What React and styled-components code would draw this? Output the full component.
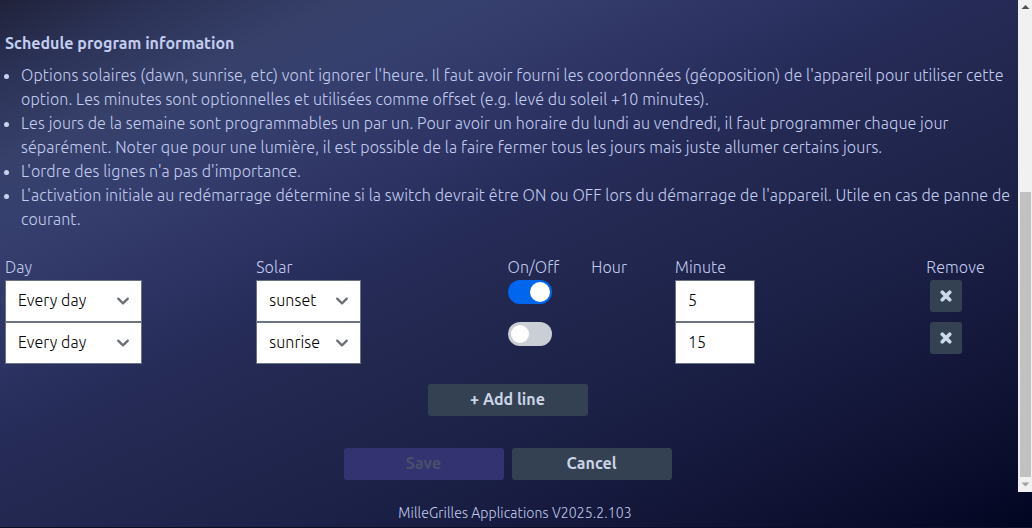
import React from "react";
import styled, { createGlobalStyle } from "styled-components";

const Global = createGlobalStyle`
  *, *::before, *::after { box-sizing: border-box; }
  body {
    margin: 0;
    overflow: hidden;
    font-family: Ubuntu, "Open Sans", "Noto Sans", sans-serif;
    font-size: 16px;
    font-weight: 300;
    line-height: 24px;
    letter-spacing: 0.1px;
    color: #c3cdf0;
    background: #02041f;
  }
`;

const Page = styled.div`
  display: flex;
  flex-direction: column;
  height: 528px;
  border-bottom: 1px solid #0b0d2b;
  background: linear-gradient(155deg,
    #20223a 0%, #2c3358 8%, #364069 16%, #36406e 22%, #323a69 29%, #2c3261 37%,
    #262c58 44%, #222850 52%, #1c2147 66%, #161a3e 76%, #111435 84%, #0a0d2b 92%, #020522 100%);
`;

const Viewport = styled.div`
  display: flex;
  height: 492px;
`;

const Content = styled.main`
  flex: 1;
  padding: 31px 8px 0 5px;
`;

const Title = styled.h2`
  margin: 0 0 8px;
  font-size: 16px;
  line-height: 24px;
  font-weight: 600;
  letter-spacing: 0;
`;

const Text = styled.span`
  display: inline-block;
  white-space: nowrap;
`;

const Notes = styled.ul`
  margin: 0 -3px 24px 0;
  padding: 0 0 0 16px;
  list-style: none;
`;

const Note = styled.li`
  position: relative;
  &::before {
    content: "";
    position: absolute;
    left: -17px;
    top: 11px;
    width: 5px;
    height: 5px;
    border-radius: 50%;
    background: #c9d3f0;
  }
`;

const Row = styled.div`
  display: grid;
  grid-template-columns: 3fr 3fr 1fr 1fr 3fr 1fr;
  height: ${(p) => (p.$head ? 25 : 42)}px;
  align-items: start;
`;

const Field = styled.div`
  display: flex;
  align-items: center;
  justify-content: space-between;
  width: ${(p) => p.$width}px;
  height: 42px;
  padding: 0 6px 0 12px;
  border: 1px solid #6b7280;
  background: #fff;
  color: #000;
  ${Text} { padding-bottom: 2px; }
`;

const Toggle = styled.div`
  display: flex;
  align-items: center;
  justify-content: ${(p) => (p.$on ? "flex-end" : "flex-start")};
  width: 44px;
  height: 24px;
  padding: 0 ${(p) => (p.$on ? 2 : 3)}px;
  border-radius: 12px;
  background: ${(p) => (p.$on ? "#0066ee" : "#cacfd6")};
  &::before {
    content: "";
    width: ${(p) => (p.$on ? 20 : 18)}px;
    height: ${(p) => (p.$on ? 20 : 18)}px;
    border-radius: 50%;
    background: #fff;
  }
`;

const Button = styled.button`
  width: 160px;
  height: 32px;
  padding: 0 0 2px;
  border: 0;
  border-radius: 3px;
  font: 600 16px/24px Ubuntu, "Open Sans", "Noto Sans", sans-serif;
  color: ${(p) => (p.$primary ? "#46506b" : "#cbd5e6")};
  background: ${(p) => (p.$primary ? "#343371" : "#344153")};
`;

const RemoveButton = styled.button`
  display: flex;
  align-items: center;
  justify-content: center;
  width: 32px;
  height: 32px;
  margin-left: 4px;
  padding: 0;
  border: 0;
  border-radius: 3px;
  color: #cbd9ec;
  background: #344153;
`;

const Actions = styled.div`
  display: flex;
  justify-content: center;
  gap: 8px;
  padding-top: ${(p) => p.$top}px;
`;

const Scrollbar = styled.div`
  display: flex;
  flex-direction: column;
  align-items: center;
  width: 14px;
  background: #f1f1f1;
`;

const Thumb = styled.div`
  width: 11px;
  height: 285px;
  margin-top: 178px;
  background: #c1c1c1;
`;

const Arrow = styled.svg`
  display: block;
  width: 14px;
  height: 14px;
`;

const Footer = styled.footer`
  display: flex;
  justify-content: center;
  padding: 9px 2px 0 0;
  font-size: 14px;
`;

const Chevron = () => (
  <svg width="24" height="24" viewBox="0 0 20 20" fill="none">
    <path d="M6 8l4 4 4-4" stroke="#6b7075" strokeWidth="1.9" strokeLinecap="round" strokeLinejoin="round" />
  </svg>
);

const Cross = () => (
  <svg width="12" height="12" viewBox="0 0 12 12" fill="none">
    <path d="M2.3 2.3L9.7 9.7M9.7 2.3L2.3 9.7" stroke="currentColor" strokeWidth="3.7" strokeLinecap="round" />
  </svg>
);

const notes = [
  "Options solaires (dawn, sunrise, etc) vont ignorer l'heure. Il faut avoir fourni les coordonnées (géoposition) de l'appareil pour utiliser cette option. Les minutes sont optionnelles et utilisées comme offset (e.g. levé du soleil +10 minutes).",
  "Les jours de la semaine sont programmables un par un. Pour avoir un horaire du lundi au vendredi, il faut programmer chaque jour séparément. Noter que pour une lumière, il est possible de la faire fermer tous les jours mais juste allumer certains jours.",
  "L'ordre des lignes n'a pas d'importance.",
  "L'activation initiale au redémarrage détermine si la switch devrait être ON ou OFF lors du démarrage de l'appareil. Utile en cas de panne de courant.",
];

const lines = [
  { day: "Every day", solar: "sunset", on: true, minute: "5" },
  { day: "Every day", solar: "sunrise", on: false, minute: "15" },
];

export default function App() {
  return (
    <>
      <Global />
      <Page>
        <Viewport>
          <Content>
            <Title>Schedule program information</Title>
            <Notes>
              {notes.map((note) => (
                <Note key={note}>{note}</Note>
              ))}
            </Notes>
            <Row $head>
              <Text>Day</Text>
              <Text>Solar</Text>
              <Text>On/Off</Text>
              <Text>Hour</Text>
              <Text>Minute</Text>
              <Text>Remove</Text>
            </Row>
            {lines.map((line, i) => (
              <Row key={i}>
                <Field $width={137}><Text>{line.day}</Text><Chevron /></Field>
                <Field $width={105}><Text>{line.solar}</Text><Chevron /></Field>
                <Toggle $on={line.on} />
                <span />
                <Field $width={80}><Text>{line.minute}</Text></Field>
                <RemoveButton><Cross /></RemoveButton>
              </Row>
            ))}
            <Actions $top={20}>
              <Button>+ Add line</Button>
            </Actions>
            <Actions $top={32}>
              <Button $primary>Save</Button>
              <Button>Cancel</Button>
            </Actions>
          </Content>
          <Scrollbar>
            <Arrow viewBox="0 0 14 14"><path d="M3.5 9L7.5 5L11.5 9Z" fill="#505050" /></Arrow>
            <Thumb />
            <Arrow viewBox="0 0 14 14"><path d="M3.5 5.500L7.500 9.500L11.500 5.500Z" fill="#a3a3a3" /></Arrow>
          </Scrollbar>
        </Viewport>
        <Footer><Text>MilleGrilles Applications V2025.2.103</Text></Footer>
      </Page>
    </>
  );
}
